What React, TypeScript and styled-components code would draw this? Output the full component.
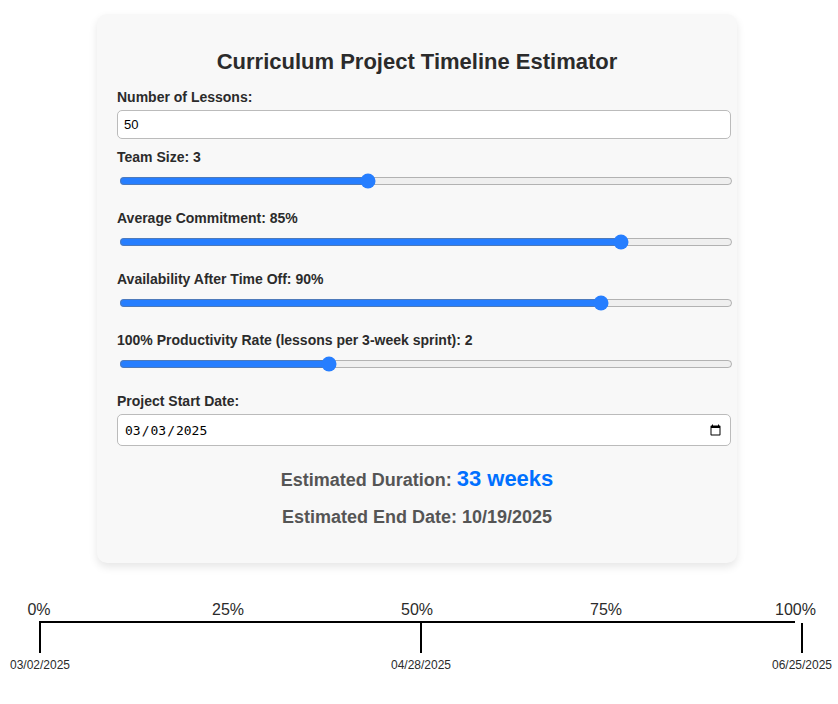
import React, { useState } from "react";
import styled, { createGlobalStyle } from "styled-components";

const GlobalStyle = createGlobalStyle`
  body {
    margin: 0;
    background: #fff;
    color: #2b2b2b;
    font-family: "Liberation Sans", Arial, sans-serif;
    font-size: 16px;
  }
`;

const Page = styled.main`
  padding: 14px 4px 20px 0;
`;

const Card = styled.form`
  box-sizing: border-box;
  max-width: 640px;
  margin: 0 auto;
  padding: 34px 20px 33px;
  background: #f8f8f8;
  border-radius: 10px;
  box-shadow: 0 4px 8px rgba(0, 0, 0, 0.1);
`;

const Title = styled.h1`
  margin: 0 0 14px;
  font-size: 22px;
  line-height: 27px;
  text-align: center;
`;

const Label = styled.label`
  display: block;
  font-size: 14px;
  font-weight: bold;
  line-height: 16px;
`;

const Field = styled.input`
  display: block;
  box-sizing: content-box;
  width: 100%;
  height: 15px;
  margin: 5px 0 10px;
  padding: 6px;
  border: 1px solid #bbb;
  border-radius: 5px;
  background: #fff;
  color: #000;
  font-family: "Liberation Sans", Arial, sans-serif;
  font-size: 13px;
`;

const DateField = styled(Field)`
  height: 18px;
  margin-bottom: 20px;
  font-family: "DejaVu Sans Mono", monospace;
`;

const Slider = styled.input`
  display: block;
  box-sizing: content-box;
  width: 100%;
  height: 16px;
  margin: 8px 2px 21px;
  padding: 0 6px;
  border: 0 solid transparent;
  border-width: 0 1px;
  accent-color: #267eff;
`;

const Result = styled.p<{ $last?: boolean }>`
  margin: 0 0 ${(p) => (p.$last ? 0 : 11)}px;
  color: #555;
  font-size: 18px;
  font-weight: bold;
  line-height: 26px;
  text-align: center;
`;

const Duration = styled.span`
  color: #0070ff;
  font-size: 22px;
`;

const Timeline = styled.section`
  margin-top: 38px;
`;

const Percents = styled.div`
  display: flex;
  justify-content: space-between;
  margin: 0 19px;
`;

const Percent = styled.span`
  width: 40px;
  line-height: 18px;
  text-align: center;
`;

const Line = styled.div`
  height: 2px;
  margin: 2px 39px 0;
  background: #000;
`;

const Milestones = styled.div`
  display: flex;
  justify-content: space-between;
  margin: 0 2px 0 10px;
`;

const Milestone = styled.div`
  display: flex;
  flex-direction: column;
  align-items: center;
  gap: 5px;
  width: 60px;
  font-size: 12px;
  line-height: 14px;
`;

const Tick = styled.div`
  width: 2px;
  height: 30px;
  background: #000;
`;

type RangeProps = {
  id: string;
  label: string;
  unit?: string;
  min: number;
  max: number;
  value: number;
  onChange: (value: number) => void;
};

function RangeField({ id, label, unit = "", min, max, value, onChange }: RangeProps) {
  return (
    <>
      <Label htmlFor={id}>{`${label}: ${value}${unit}`}</Label>
      <Slider
        id={id}
        type="range"
        min={min}
        max={max}
        value={value}
        onChange={(e) => onChange(Number(e.target.value))}
      />
    </>
  );
}

export default function App() {
  const [lessons, setLessons] = useState("50");
  const [team, setTeam] = useState(3);
  const [commitment, setCommitment] = useState(85);
  const [availability, setAvailability] = useState(90);
  const [rate, setRate] = useState(2);
  const [start, setStart] = useState("2025-03-03");

  return (
    <>
      <GlobalStyle />
      <Page>
        <Card>
          <Title>Curriculum Project Timeline Estimator</Title>
          <Label htmlFor="lessons">Number of Lessons:</Label>
          <Field id="lessons" type="number" value={lessons} onChange={(e) => setLessons(e.target.value)} />
          <RangeField id="team" label="Team Size" min={1} max={6} value={team} onChange={setTeam} />
          <RangeField id="commitment" label="Average Commitment" unit="%" min={10} max={100} value={commitment} onChange={setCommitment} />
          <RangeField id="availability" label="Availability After Time Off" unit="%" min={50} max={100} value={availability} onChange={setAvailability} />
          <RangeField id="rate" label="100% Productivity Rate (lessons per 3-week sprint)" min={1} max={4} value={rate} onChange={setRate} />
          <Label htmlFor="start">Project Start Date:</Label>
          <DateField id="start" type="date" value={start} onChange={(e) => setStart(e.target.value)} />
          <Result>
            Estimated Duration: <Duration>33 weeks</Duration>
          </Result>
          <Result $last>Estimated End Date: 10/19/2025</Result>
        </Card>
        <Timeline>
          <Percents>
            {["0%", "25%", "50%", "75%", "100%"].map((p) => (
              <Percent key={p}>{p}</Percent>
            ))}
          </Percents>
          <Line />
          <Milestones>
            {["03/02/2025", "04/28/2025", "06/25/2025"].map((d) => (
              <Milestone key={d}>
                <Tick />
                <time>{d}</time>
              </Milestone>
            ))}
          </Milestones>
        </Timeline>
      </Page>
    </>
  );
}
